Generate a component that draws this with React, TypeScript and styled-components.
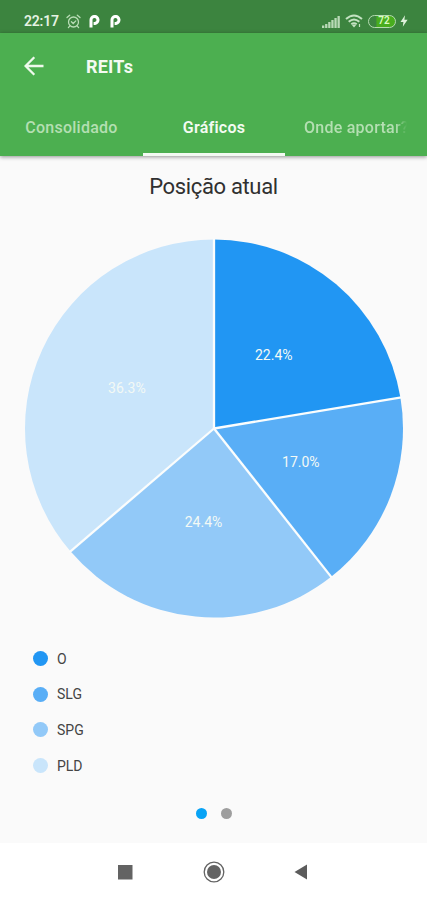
import React from 'react';
import styled, { createGlobalStyle } from 'styled-components';

const GlobalStyle = createGlobalStyle`
  * { box-sizing: border-box; }
  body { margin: 0; background: #fafafa; font-family: Roboto, "Liberation Sans", sans-serif; }
`;

const Screen = styled.div`
  width: 427px;
  height: 900px;
  display: flex;
  flex-direction: column;
  background: #fafafa;
  overflow: hidden;
`;

const StatusBar = styled.div`
  height: 33px;
  flex: none;
  display: flex;
  align-items: center;
  padding: 9px 19px 0 24px;
  background: #3c843f;
  color: #e6f3e4;
`;

const Clock = styled.span`
  width: 36px;
  font-size: 14px;
  line-height: 24px;
  font-weight: 600;
  letter-spacing: -0.2px;
  white-space: nowrap;
`;

const StatusIcon = styled.svg<{ $gap: number }>`
  flex: none;
  display: block;
  margin-left: ${(p) => p.$gap}px;
`;

const Spacer = styled.div`
  flex: 1;
`;

const Battery = styled.div`
  width: 28px;
  height: 13px;
  margin-left: 5px;
  border: 1.5px solid #b5dbb1;
  border-radius: 7px;
  display: flex;
  align-items: center;
  justify-content: center;
  padding-left: 4px;
  background: linear-gradient(90deg, #3c843f 25%, #48ad1e 32%);
  color: #d9fbc0;
  font-size: 10px;
  line-height: 10px;
  font-weight: 600;
`;

const Header = styled.header`
  height: 123px;
  flex: none;
  display: flex;
  flex-direction: column;
  background: #4caf50;
  box-shadow: 0 1px 4px rgba(0, 0, 0, 0.42);
  z-index: 1;
`;

const TitleRow = styled.div`
  height: 66px;
  display: flex;
  align-items: center;
  padding-left: 24px;
`;

const ScreenName = styled.h1`
  margin: 1px 0 0 42px;
  color: #f4fbf2;
  font-size: 18px;
  line-height: 24px;
  font-weight: 700;
  letter-spacing: 0.2px;
`;

const Tabs = styled.nav`
  height: 57px;
  display: grid;
  grid-template-columns: 143px 142px 142px;
`;

const Tab = styled.div<{ $active?: boolean }>`
  display: flex;
  justify-content: center;
  padding-top: 16px;
  border-bottom: 3px solid ${(p) => (p.$active ? '#f3faf2' : 'transparent')};
  color: ${(p) => (p.$active ? '#f4fbf2' : '#b4dfb2')};
  font-size: 16px;
  line-height: 25px;
  font-weight: ${(p) => (p.$active ? 600 : 500)};
  letter-spacing: 0.25px;
  white-space: nowrap;
`;

const FadedLabel = styled.span`
  width: 104px;
  overflow: hidden;
  mask-image: linear-gradient(90deg, #000 88%, transparent 99%);
`;

const Content = styled.main`
  flex: 1;
  display: flex;
  flex-direction: column;
`;

const ChartTitle = styled.h2`
  margin: 17px 0 0;
  text-align: center;
  color: #303030;
  font-size: 22px;
  line-height: 28px;
  font-weight: 400;
  letter-spacing: -0.35px;
`;

const Chart = styled.svg`
  display: block;
  margin: 37px 0 0 24px;
`;

const SliceLabel = styled.text`
  fill: #f3f9f5;
  font-size: 14px;
  text-anchor: middle;
`;

const Legend = styled.ul`
  list-style: none;
  margin: 23px 0 0;
  padding: 0 0 0 33px;
`;

const LegendItem = styled.li`
  height: 35.6px;
  display: flex;
  align-items: center;
  gap: 9px;
  color: #444;
  font-size: 14px;
`;

const Dot = styled.span<{ $color: string; $size: number }>`
  width: ${(p) => p.$size}px;
  height: ${(p) => p.$size}px;
  border-radius: 50%;
  background: ${(p) => p.$color};
`;

const Pager = styled.div`
  display: flex;
  justify-content: center;
  gap: 14px;
  margin-top: 25px;
`;

const NavBar = styled.footer`
  height: 57px;
  flex: none;
  display: flex;
  align-items: center;
  justify-content: space-between;
  padding: 1px 119px 0 117px;
  background: #fff;
`;

const slices = [
  { name: 'O', value: 22.4, color: '#2196f3' },
  { name: 'SLG', value: 17.0, color: '#59aef6' },
  { name: 'SPG', value: 24.4, color: '#92c9f8' },
  { name: 'PLD', value: 36.3, color: '#c9e5fb' },
];

const CX = 190;
const CY = 190.5;
const R = 189;

const pointAt = (fraction: number, radius: number) => {
  const angle = fraction * Math.PI * 2;
  return [CX + radius * Math.sin(angle), CY - radius * Math.cos(angle)];
};

function PieChart() {
  const total = slices.reduce((sum, s) => sum + s.value, 0);
  let acc = 0;
  const arcs = slices.map((s) => {
    const start = acc / total;
    acc += s.value;
    return { ...s, start, end: acc / total };
  });
  return (
    <Chart width="380" height="380" viewBox="0 0 380 380">
      {arcs.map((a) => {
        const [x1, y1] = pointAt(a.start, R);
        const [x2, y2] = pointAt(a.end, R);
        return <path key={a.name} fill={a.color} d={`M${CX} ${CY}L${x1} ${y1}A${R} ${R} 0 0 1 ${x2} ${y2}Z`} />;
      })}
      {arcs.map((a) => {
        const [x, y] = pointAt(a.start, R + 1);
        return <line key={a.name} x1={CX} y1={CY} x2={x} y2={y} stroke="#fbfdfd" strokeWidth="2.3" />;
      })}
      {arcs.map((a) => {
        const [x, y] = pointAt((a.start + a.end) / 2, R / 2);
        return <SliceLabel key={a.name} x={x - 1.3} y={y + 4}>{a.value.toFixed(1)}%</SliceLabel>;
      })}
    </Chart>
  );
}

/* Round badge with a stem at the lower left and a small notch in the middle. */
const BadgeIcon = ({ gap }: { gap: number }) => (
  <StatusIcon $gap={gap} width="11" height="13" viewBox="0 0 11 13" fill="none">
    <path d="M2 12.4V5.2A3.5 3.5 0 1 1 6 8.4H4.6" stroke="#fff" strokeWidth="3" />
  </StatusIcon>
);

export default function App() {
  return (
    <>
      <GlobalStyle />
      <Screen>
        <StatusBar>
          <Clock>22:17</Clock>
          <StatusIcon $gap={6} width="15" height="15" viewBox="0 0 15 15" fill="none" stroke="#b9ddb6" strokeWidth="1.3" strokeLinecap="round">
            <circle cx="7.5" cy="8" r="5" />
            <path d="M1 3.6L3.7 1.2M14 3.6L11.3 1.2M5.4 7.8L7.2 9.5L9.8 6.9M3.6 12.2L2.4 13.6M11.4 12.2L12.6 13.6" />
          </StatusIcon>
          <BadgeIcon gap={8} />
          <BadgeIcon gap={10} />
          <Spacer />
          <StatusIcon $gap={0} width="18" height="13" viewBox="0 0 18 13" fill="#b9dab7">
            <path d="M0 10.5h2.3V13H0zM3.1 9h2.3v4H3.1zM6.2 7h2.3v6H6.2zM9.3 5h2.3v8H9.3zM12.4 3h2.3v10h-2.3zM15.5 1h2.3v12h-2.3z" />
          </StatusIcon>
          <StatusIcon $gap={5} width="18" height="14" viewBox="0 0 18 14" fill="none" stroke="#c4e2c2" strokeWidth="2">
            <path d="M1 5Q9 -2 17 5M3.7 7.8Q9 3.2 14.3 7.8M6.3 10.3Q9 8.2 11.7 10.3" />
            <path d="M7 11.2L9 13.4L11 11.2Q9 9.8 7 11.2Z" fill="#c4e2c2" stroke="none" />
            <path d="M14.5 10v3" strokeWidth="1.2" />
          </StatusIcon>
          <Battery>72</Battery>
          <StatusIcon $gap={4} width="8" height="12" viewBox="0 0 8 12" fill="#dff2dc">
            <path d="M5 0.3L0.5 7H3.4L2.8 11.7L7.6 4.8H4.4Z" />
          </StatusIcon>
        </StatusBar>
        <Header>
          <TitleRow>
            <svg width="20" height="20" viewBox="0 0 20 20" fill="none" stroke="#eef9ec" strokeWidth="2.3">
              <path d="M19.5 10H2M10.3 1.2L1.6 10L10.3 18.8" />
            </svg>
            <ScreenName>REITs</ScreenName>
          </TitleRow>
          <Tabs>
            <Tab>Consolidado</Tab>
            <Tab $active>Gráficos</Tab>
            <Tab><FadedLabel>Onde aportar?</FadedLabel></Tab>
          </Tabs>
        </Header>
        <Content>
          <ChartTitle>Posição atual</ChartTitle>
          <PieChart />
          <Legend>
            {slices.map((s) => (
              <LegendItem key={s.name}>
                <Dot $size={15} $color={s.color} />
                {s.name}
              </LegendItem>
            ))}
          </Legend>
          <Pager>
            <Dot $size={11} $color="#08a3f5" />
            <Dot $size={11} $color="#9e9e9e" />
          </Pager>
        </Content>
        <NavBar>
          <svg width="16" height="16" viewBox="0 0 16 16"><path d="M1 1h14.5v14.5H1z" fill="#636363" /></svg>
          <svg width="22" height="22" viewBox="0 0 22 22">
            <circle cx="11" cy="11" r="9.8" fill="none" stroke="#636363" strokeWidth="1.3" />
            <circle cx="11" cy="11" r="7" fill="#636363" />
          </svg>
          <svg width="14" height="16" viewBox="0 0 14 16"><path d="M0.5 8L13 0.6V15.4Z" fill="#5c5c5c" /></svg>
        </NavBar>
      </Screen>
    </>
  );
}
